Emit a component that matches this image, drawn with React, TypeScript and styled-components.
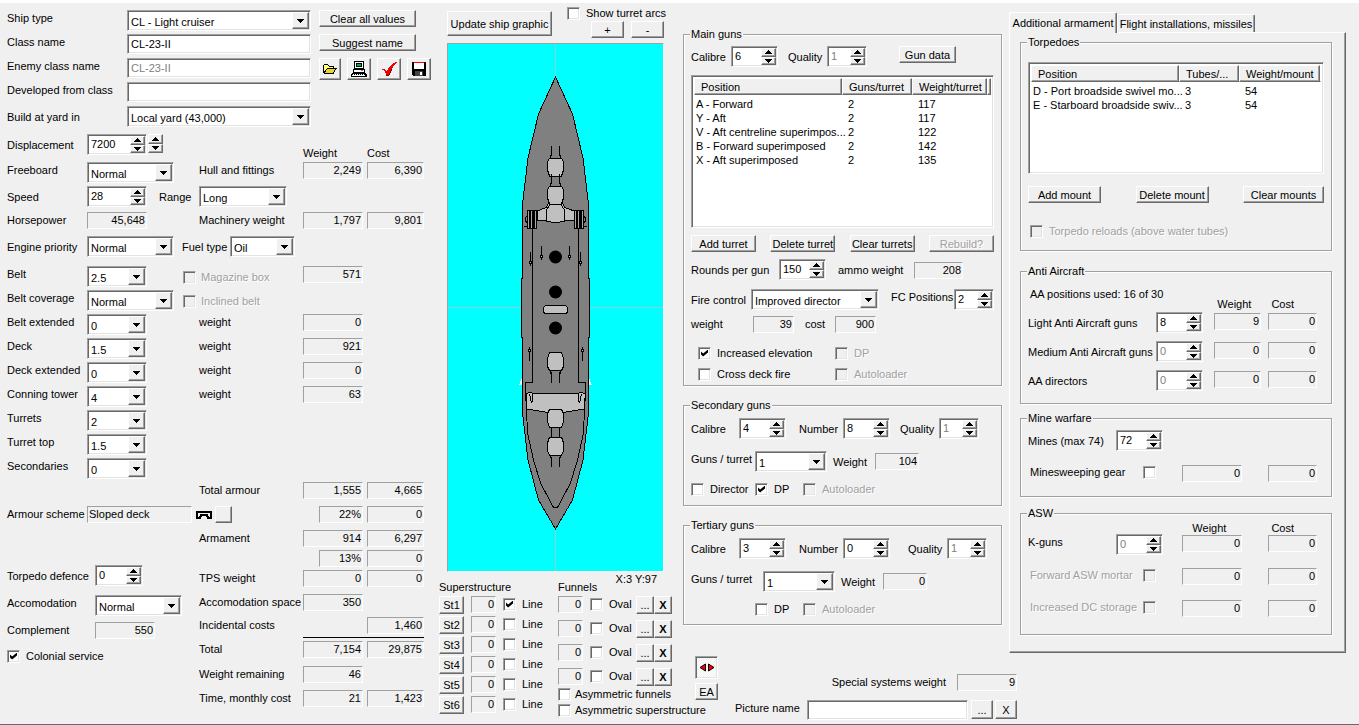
import React from "react";
import styled, { createGlobalStyle, css } from "styled-components";

const face = "#f0f0f0";
const shade = "#a0a0a0";
const dark = "#696969";
const soft = "#e3e3e3";

const GlobalStyle = createGlobalStyle`
  * { box-sizing: border-box; }
  body { margin: 0; background: ${face}; }
  body, button, input, select, output, legend, table {
    font-family: "Liberation Sans", Arial, sans-serif;
    font-size: 11px;
    line-height: 16px;
    color: #000;
  }
`;

const raised = css`
  background: ${face};
  border: 1px solid;
  border-color: #fff ${dark} ${dark} #fff;
  box-shadow: inset -1px -1px 0 ${shade};
`;

const sunken = css`
  background: #fff;
  border: 1px solid;
  border-color: ${shade} #fff #fff ${shade};
  box-shadow: inset 1px 1px 0 ${dark}, inset -1px -1px 0 ${soft};
`;

/* ---------- window layout ---------- */

const Page = styled.div`
  min-height: 100vh;
  display: flex;
  flex-direction: column;
  background: ${face};
  border-top: 3px solid #fff;
  white-space: nowrap;
`;
const Columns = styled.main`
  flex: 1;
  display: grid;
  grid-template-columns: minmax(432px, 439fr) minmax(232px, 244fr) minmax(650px, 676fr);
`;
const StatusEdge = styled.footer`
  height: 2px;
  background: #d8d8d8;
  border-top: 1px solid ${dark};
`;
const Column = styled.div`
  display: flex;
  flex-direction: column;
  min-width: 0;
`;
const Row = styled.div<{ $h?: number; $gap?: number; $mid?: boolean; $pad?: number; $top?: number }>`
  display: flex;
  flex: none;
  align-items: ${(p) => (p.$mid ? "center" : "flex-start")};
  height: ${(p) => (p.$h ? `${p.$h}px` : "auto")};
  gap: ${(p) => p.$gap ?? 0}px;
  padding-left: ${(p) => p.$pad ?? 0}px;
  margin-top: ${(p) => p.$top ?? 0}px;
`;
const Cell = styled.div<{ $w?: number; $gap?: number; $end?: boolean }>`
  display: flex;
  flex: ${(p) => (p.$w ? `0 0 ${p.$w}px` : "1 1 0")};
  min-width: 0;
  gap: ${(p) => p.$gap ?? 0}px;
  justify-content: ${(p) => (p.$end ? "flex-end" : "flex-start")};
`;

/* ---------- controls ---------- */

const Label = styled.label<{ $w?: number; $drop?: boolean }>`
  flex: none;
  width: ${(p) => (p.$w ? `${p.$w}px` : "auto")};
  padding-top: ${(p) => (p.$drop ? 3 : 0)}px;
`;
const Text = styled.span<{ $w?: number }>`
  flex: none;
  width: ${(p) => (p.$w ? `${p.$w}px` : "auto")};
`;
const ReadOut = styled.output<{ $w: number; $left?: boolean }>`
  flex: none;
  display: block;
  width: ${(p) => p.$w}px;
  height: 17px;
  padding: 0 1px;
  line-height: 15px;
  text-align: ${(p) => (p.$left ? "left" : "right")};
  border: 1px solid;
  border-color: ${shade} #fff #fff ${shade};
`;
const Button = styled.button<{ $w: number; $h?: number }>`
  ${raised}
  flex: none;
  display: flex;
  align-items: center;
  justify-content: center;
  width: ${(p) => p.$w}px;
  height: ${(p) => p.$h ?? 17}px;
  padding: 0;
  line-height: 14px;
  white-space: nowrap;
  &:disabled { color: ${shade}; text-shadow: 1px 1px 0 #fff; }
`;
const ToggleButton = styled(Button)`
  ${sunken}
  background: repeating-conic-gradient(#fff 0 25%, ${face} 0 50%) 0 0 / 2px 2px;
`;
const TextBox = styled.input`
  ${sunken}
  flex: 1 1 0;
  min-width: 0;
  height: 20px;
  padding: 0 3px;
  outline: none;
  &:disabled { color: #808080; }
`;

const SelectFrame = styled.div<{ $w?: number }>`
  ${sunken}
  position: relative;
  flex: ${(p) => (p.$w ? `0 0 ${p.$w}px` : "1 1 0")};
  min-width: 0;
  height: 21px;
`;
const NativeSelect = styled.select`
  appearance: none;
  display: block;
  width: 100%;
  height: 19px;
  padding: 2px 18px 0 3px;
  border: 0;
  background: transparent;
  outline: none;
`;
const DropArrow = styled.span`
  ${raised}
  position: absolute;
  top: 1px;
  right: 1px;
  width: 17px;
  height: 17px;
  display: flex;
  align-items: center;
  justify-content: center;
  pointer-events: none;
`;

const Triangle = ({ up }: { up?: boolean }) => (
  <svg width="7" height="4" viewBox="0 0 7 4" shapeRendering="crispEdges" aria-hidden="true">
    <path d={up ? "M3 0h1v1h1v1h1v1h1v1H0V3h1V2h1V1h1z" : "M0 0h7v1H6v1H5v1H4v1H3V3H2V2H1V1H0z"} />
  </svg>
);

function Select({ id, value, w }: { id: string; value: string; w?: number }) {
  return (
    <SelectFrame $w={w}>
      <NativeSelect id={id} defaultValue={value}>
        <option>{value}</option>
      </NativeSelect>
      <DropArrow><Triangle /></DropArrow>
    </SelectFrame>
  );
}

const SpinFrame = styled.div<{ $w: number }>`
  ${sunken}
  flex: none;
  display: flex;
  width: ${(p) => p.$w}px;
  height: 21px;
  padding: 1px;
`;
const SpinInput = styled.input`
  flex: 1;
  min-width: 0;
  width: 0;
  padding: 0 0 1px 2px;
  border: 0;
  outline: none;
  background: #fff;
  &:disabled { color: #808080; }
`;
const SpinPair = styled.div<{ $h: number }>`
  flex: none;
  display: grid;
  grid-template-rows: 1fr 1fr;
  width: 15px;
  height: ${(p) => p.$h}px;
`;
const SpinButton = styled.button`
  ${raised}
  min-height: 0;
  padding: 0;
  display: flex;
  align-items: center;
  justify-content: center;
`;

const Arrows = ({ name, h = 17 }: { name: string; h?: number }) => (
  <SpinPair $h={h}>
    <SpinButton type="button" aria-label={`Increase ${name}`}><Triangle up /></SpinButton>
    <SpinButton type="button" aria-label={`Decrease ${name}`}><Triangle /></SpinButton>
  </SpinPair>
);

function Spin({ id, value, w, off }: { id: string; value: string; w: number; off?: boolean }) {
  return (
    <SpinFrame $w={w}>
      <SpinInput id={id} defaultValue={value} disabled={off} />
      <Arrows name={id} />
    </SpinFrame>
  );
}

const CheckLabel = styled.label<{ $off?: boolean; $w?: number; $gap?: number; $reverse?: boolean; $drop?: boolean }>`
  flex: none;
  display: flex;
  align-items: center;
  flex-direction: ${(p) => (p.$reverse ? "row-reverse" : "row")};
  justify-content: ${(p) => (p.$reverse ? "space-between" : "flex-start")};
  gap: ${(p) => p.$gap ?? 6}px;
  width: ${(p) => (p.$w ? `${p.$w}px` : "auto")};
  padding-top: ${(p) => (p.$drop ? 3 : 0)}px;
  ${(p) => p.$off && css`color: ${shade}; text-shadow: 1px 1px 0 #fff;`}
`;
const CheckBox = styled.input`
  ${sunken}
  appearance: none;
  flex: none;
  width: 13px;
  height: 13px;
  margin: 0;
  display: grid;
  place-items: center;
  &:checked::after {
    content: "";
    width: 7px;
    height: 7px;
    background: #000;
    clip-path: polygon(0 28%, 30% 57%, 100% 0, 100% 42%, 30% 100%, 0 71%);
  }
  &:disabled { background: ${face}; }
`;

type CheckProps = { text: string; on?: boolean; off?: boolean; w?: number; gap?: number; reverse?: boolean; drop?: boolean };
const Check = ({ text, on, off, w, gap, reverse, drop }: CheckProps) => (
  <CheckLabel $off={off} $w={w} $gap={gap} $reverse={reverse} $drop={drop}>
    <CheckBox type="checkbox" defaultChecked={on} disabled={off} />
    {text}
  </CheckLabel>
);

const Group = styled.fieldset<{ $h: number; $top?: number }>`
  margin: ${(p) => p.$top ?? 0}px 0 0;
  padding: 0 7px;
  min-width: 0;
  height: ${(p) => p.$h}px;
  border: 1px solid ${shade};
  box-shadow: inset 1px 1px 0 #fff, 1px 1px 0 #fff;
`;
const Legend = styled.legend`
  padding: 0 1px;
  margin-left: -1px;
  line-height: 14px;
  background: ${face};
`;

/* ---------- lists ---------- */

const ListBox = styled.div<{ $h: number }>`
  ${sunken}
  height: ${(p) => p.$h}px;
  padding: 2px;
`;
const ListTable = styled.table`
  width: 100%;
  table-layout: fixed;
  border-collapse: separate;
  border-spacing: 0;
  th {
    ${raised}
    height: 17px;
    padding: 0 0 0 6px;
    font-weight: 400;
    line-height: 14px;
    text-align: left;
    overflow: hidden;
  }
  th:last-child, td:last-child { padding: 0; }
  td {
    height: 14px;
    padding: 0 0 0 6px;
    line-height: 14px;
  }
  td:first-child { padding-left: 2px; }
  tbody tr:first-child td { height: 16px; padding-top: 2px; }
`;

function List({ heads, widths, rows, h }: { heads: string[]; widths: number[]; rows: string[][]; h: number }) {
  return (
    <ListBox $h={h}>
      <ListTable>
        <colgroup>
          {widths.map((w, i) => <col key={i} width={w} />)}
          <col />
        </colgroup>
        <thead>
          <tr>{heads.map((t) => <th key={t}>{t}</th>)}<th aria-hidden="true" /></tr>
        </thead>
        <tbody>
          {rows.map((r) => (
            <tr key={r[0]}>{r.map((c, i) => <td key={i}>{c}</td>)}<td /></tr>
          ))}
        </tbody>
      </ListTable>
    </ListBox>
  );
}

/* ---------- icons ---------- */

const Icon = ({ children }: { children: React.ReactNode }) => (
  <svg width="16" height="16" viewBox="0 0 16 16" shapeRendering="crispEdges" aria-hidden="true">{children}</svg>
);
const OpenIcon = () => (
  <Icon>
    <path d="M1 12V4h1V3h4v1h1v1h5v2h3v1h-1v1h-1v2h-1v2H2v-1z" fill="#000" />
    <path d="M2 4h4v1h1v1h4v1H5v1H4v1H3v1H2z" fill="#ffff80" />
    <path d="M5 8h8v1h-1v2h-1v1H3v-1h1V9h1z" fill="#e8d820" />
  </Icon>
);
const PcIcon = () => (
  <Icon>
    <path d="M3 0h10v8H3zM2 8h12v4H2zM1 12h14v1h1v3H0v-3h1z" />
    <path d="M4 1h8v6H4zM3 9h10v2H3zM2 13h1v1h1v-1h1v1h1v-1h1v1h1v-1h1v1h1v-1h1v1h1v-1h1v1h1v1H1v-1h1z" fill="#fff" />
    <path d="M5 2h6v4H5z" />
    <path d="M6 3h4v2H6z" fill="#00b050" />
    <path d="M10 9h2v1h-2z" fill="#808080" />
  </Icon>
);
const TickIcon = () => (
  <Icon>
    <path d="M1 8h3v1h1v1h1V9h1V7h1V6h1V5h1V4h1V3h1V2h2V1h2v1h-1v1h-1v1h-1v1h-1v2h-1v1h-1v2H9v2H8v2H5v-2H4v-2H3v-1H2V9H1z" fill="#f00000" />
    <path d="M5 14h3v1H5zM8 12h1v2H8zM9 10h1v2H9zM10 8h1v2h-1z" fill="#700" />
  </Icon>
);
const DiskIcon = () => (
  <Icon>
    <path d="M1 1h14v14H2v-1H1z" />
    <path d="M3 2h10v6H3z" fill="#fff" />
    <path d="M3 1h10v1H3z" fill="#f00" />
    <path d="M4 10h8v5H4z" fill="#444" />
    <path d="M9 11h2v3H9z" fill="#fff" />
  </Icon>
);
const SlopedDeckIcon = () => (
  <svg width="16" height="8" viewBox="0 0 16 8" shapeRendering="crispEdges" aria-hidden="true">
    <path d="M0 0h16v8h-5V6h-1V5H6v1H5v2H0zM2 2v4h1V5h1V3h8v2h1v1h1V2z" fillRule="evenodd" />
  </svg>
);
const MirrorIcon = () => (
  <svg width="16" height="9" viewBox="0 0 16 9" aria-hidden="true">
    <path d="M6.5 1v7L1 4.500zM9.500 1v7L15 4.500z" fill="#f00" stroke="#000" />
  </svg>
);

/* ---------- ship plan ---------- */

const Sea = styled.div`
  width: 217px;
  height: 529px;
  border: 1px solid;
  border-color: ${shade} #fff #fff ${shade};
  background: #0ff;
  svg { display: block; }
`;

const Turret = ({ y, aft }: { y: number; aft?: boolean }) => (
  <g transform={`translate(555.5 ${y})${aft ? " scale(1 -1)" : ""}`} stroke="#000">
    <path d="M-4-21V-14L-5-9M4-21V-14L5-9" fill="none" strokeWidth="1.300" />
    <path d="M-6-9H6L8-5V3L6 9H-6L-8 3V-5z" fill="#c0c0c0" />
  </g>
);
const Barbette = ({ x }: { x: number }) => (
  <g>
    <path d={`M${x} 210h10v19h-10z`} fill="#000" />
    <path d={`M${x + 1.5} 211v17M${x + 4.5} 211v17M${x + 8.5} 211v17`} stroke="#a8a8a8" />
  </g>
);
const LightGun = ({ x, y, up }: { x: number; y: number; up?: boolean }) => (
  <g transform={`translate(${x} ${y})${up ? " scale(1 -1)" : ""}`}>
    <path d="M.5-10V4M-.5-1V2M1.500-1V2" stroke="#000" />
    <path d="M0 0h1v1H0z" fill="#c0c0c0" />
  </g>
);

const ShipPlan = () => (
  <svg width="215" height="527" viewBox="448 44 215 527" role="img" aria-label="Ship plan" shapeRendering="crispEdges">
    <path d="M555.5 44V571M448 307.500H663" stroke="#c0c0c0" strokeOpacity=".7" />
    <path d="M519 385l3-7v7zM592 385l-3-7v7z" fill="#fff" />
    <path
      d="M555.5 77L538.500 114L528 158L522.500 204V278H521.500V337H522.500V413L528 460L538.500 500L555.500 529L572.500 500L583 460L588.500 413V337H589.500V278H588.500V204L583 158L572.500 114z"
      fill="#808080" stroke="#000"
    />
    <path
      d="M532.500 228V382.500H525.500V393L526.500 409L527.500 433L533.500 460L540.500 483L553.500 507.500H557.500L570.500 483L577.500 460L583.500 433L584.500 409L585.500 393V382.500H578.500V228"
      fill="none" stroke="#000"
    />
    <Turret y={167} />
    <path d="M549.500 201.500L546 207.500L537.500 211V220.500H574V211L565 207.500L561.500 201.500z" fill="#c0c0c0" stroke="#000" />
    <Turret y={195} />
    <path d="M550 204.500H561L564.500 210V221.500L555.500 222.500L546.500 221.500V210z" fill="#c0c0c0" stroke="#000" />
    <path d="M524 226.500h4M583 226.500h4M527 216l-1.500 2v3l1.500 2M584 216l1.500 2v3l-1.500 2" fill="none" stroke="#000" />
    <Barbette x={527} />
    <Barbette x={574} />
    <LightGun x={541} y={256} />
    <LightGun x={530} y={262} />
    <LightGun x={569} y={256} />
    <LightGun x={580} y={262} />
    <g shapeRendering="auto">
      <circle cx="555.500" cy="257" r="6.500" />
      <circle cx="555.500" cy="292" r="6.500" />
      <circle cx="555.500" cy="328" r="6.500" />
    </g>
    <rect x="543.500" y="305.500" width="24" height="8" rx="3" fill="#c0c0c0" stroke="#000" />
    <LightGun x={529} y={351} up />
    <LightGun x={582} y={351} up />
    <Turret y={361.5} aft />
    <path d="M526 397V394L530 392L533 393.500H578L581 392L585 394V398L584 409L563 412.500H548L527 409z" fill="#c0c0c0" stroke="#000" />
    <path d="M529.500 394l2 9M532.500 393v9M581.500 394l-2 9M578.500 393v9" stroke="#000" />
    <Turret y={446} aft />
    <path d="M551.500 427V438M559.500 427V438" stroke="#000" />
    <path d="M549.500 409.500H561.500L563.500 413.500V421.500L561.500 427.500H549.500L547.500 421.500V413.500z" fill="#c0c0c0" stroke="#000" />
  </svg>
);

/* ---------- left column: general data ---------- */

const LeftColumn = styled(Column)`
  padding: 7px 15px 0 7px;
`;
const HeadForm = styled.div`
  display: grid;
  grid-template-columns: minmax(0, 304px) 112px;
  column-gap: 8px;
  margin-right: -7px;
`;
const ToolRow = styled.div`
  display: flex;
  justify-content: space-between;
`;
const TotalRule = styled.hr`
  flex: none;
  width: 121px;
  margin: 2px 0 3px auto;
  border: 0;
  border-top: 1px solid #000;
  height: 0;
`;
const Split = styled.div`
  display: flex;
  padding-bottom: 13px;
`;
const WeightCost = styled.div`
  display: flex;
  align-self: flex-end;
  width: 121px;
  padding-bottom: 1px;
`;
const SummaryColumn = styled(Column)`
  flex: 1;
`;

const General = () => (
  <HeadForm>
    <Column>
      <Row $h={24}><Label htmlFor="ship-type" $w={120}>Ship type</Label><Select id="ship-type" value="CL - Light cruiser" /></Row>
      <Row $h={24}><Label htmlFor="class-name" $w={120}>Class name</Label><TextBox id="class-name" defaultValue="CL-23-II" /></Row>
      <Row $h={24}><Label htmlFor="enemy-class" $w={120}>Enemy class name</Label><TextBox id="enemy-class" defaultValue="CL-23-II" disabled /></Row>
      <Row $h={24}><Label htmlFor="developed-from" $w={120}>Developed from class</Label><TextBox id="developed-from" /></Row>
      <Row $h={28}><Label htmlFor="yard" $w={120} $drop>Build at yard in</Label><Select id="yard" value="Local yard (43,000)" /></Row>
    </Column>
    <Column>
      <Row $h={24}><Button type="button" $w={97}>Clear all values</Button></Row>
      <Row $h={24}><Button type="button" $w={97}>Suggest name</Button></Row>
      <ToolRow>
        <Button type="button" $w={22} $h={22} aria-label="Open"><OpenIcon /></Button>
        <Button type="button" $w={24} $h={22} aria-label="Computer"><PcIcon /></Button>
        <Button type="button" $w={24} $h={22} aria-label="Check design"><TickIcon /></Button>
        <Button type="button" $w={24} $h={22} aria-label="Save"><DiskIcon /></Button>
      </ToolRow>
    </Column>
  </HeadForm>
);

const Totals = ({ name, weight, cost, narrow }: { name: string; weight?: string; cost?: string; narrow?: boolean }) => (
  <Cell $w={121} $gap={4} $end>
    {weight !== undefined && <ReadOut $w={narrow ? 44 : 60} aria-label={`${name} weight`}>{weight}</ReadOut>}
    {cost !== undefined ? <ReadOut $w={57} aria-label={`${name} cost`}>{cost}</ReadOut> : <Text $w={57} />}
  </Cell>
);

const armour = [
  { id: "belt-extended", name: "Belt extended", value: "0", weight: "0" },
  { id: "deck", name: "Deck", value: "1.5", weight: "921" },
  { id: "deck-extended", name: "Deck extended", value: "0", weight: "0" },
  { id: "conning-tower", name: "Conning tower", value: "4", weight: "63" },
  { id: "turrets", name: "Turrets", value: "2" },
  { id: "turret-top", name: "Turret top", value: "1.5" },
  { id: "secondaries", name: "Secondaries", value: "0" },
];

const Hull = () => (
  <LeftColumn>
    <General />
    <Row $h={28}>
      <Label htmlFor="displacement" $w={80} $drop>Displacement</Label>
      <Cell $gap={1}><Spin id="displacement" value="7200" w={60} /><Arrows name="displacement step" h={19} /></Cell>
      <WeightCost><Text $w={64}>Weight</Text><Text>Cost</Text></WeightCost>
    </Row>
    <Row $h={24}>
      <Label htmlFor="freeboard" $w={80}>Freeboard</Label>
      <Cell $w={112}><Select id="freeboard" value="Normal" w={87} /></Cell>
      <Cell>Hull and fittings</Cell>
      <Totals name="Hull" weight="2,249" cost="6,390" />
    </Row>
    <Row $h={26}>
      <Label htmlFor="speed" $w={80} $drop>Speed</Label>
      <Cell $w={72}><Spin id="speed" value="28" w={60} /></Cell>
      <Label htmlFor="range" $w={40} $drop>Range</Label>
      <Select id="range" value="Long" w={88} />
    </Row>
    <Row $h={24}>
      <Label htmlFor="horsepower" $w={80}>Horsepower</Label>
      <Cell $w={112}><ReadOut id="horsepower" $w={60}>45,648</ReadOut></Cell>
      <Cell>Machinery weight</Cell>
      <Totals name="Machinery" weight="1,797" cost="9,801" />
    </Row>
    <Row $h={30}>
      <Label htmlFor="engine-priority" $w={80} $drop>Engine priority</Label>
      <Cell $w={95}><Select id="engine-priority" value="Normal" w={87} /></Cell>
      <Label htmlFor="fuel" $w={48} $drop>Fuel type</Label>
      <Select id="fuel" value="Oil" w={65} />
    </Row>
    <Row $h={24}>
      <Label htmlFor="belt" $w={80}>Belt</Label>
      <Cell $w={96}><Select id="belt" value="2.5" w={60} /></Cell>
      <Cell><Check text="Magazine box" off gap={5} drop /></Cell>
      <Totals name="Belt" weight="571" />
    </Row>
    <Row $h={24}>
      <Label htmlFor="belt-coverage" $w={80}>Belt coverage</Label>
      <Cell $w={96}><Select id="belt-coverage" value="Normal" w={87} /></Cell>
      <Cell><Check text="Inclined belt" off gap={5} drop /></Cell>
    </Row>
    {armour.map((a) => (
      <Row $h={24} key={a.id}>
        <Label htmlFor={a.id} $w={80}>{a.name}</Label>
        <Cell $w={112}><Select id={a.id} value={a.value} w={60} /></Cell>
        <Cell>{a.weight && "weight"}</Cell>
        <Totals name={a.name} weight={a.weight} />
      </Row>
    ))}
    <Row $h={24} $pad={192}>
      <Cell>Total armour</Cell>
      <Totals name="Total armour" weight="1,555" cost="4,665" />
    </Row>
    <Row $h={24}>
      <Label htmlFor="armour-scheme" $w={80}>Armour scheme</Label>
      <Cell $gap={4}>
        <ReadOut id="armour-scheme" $w={105} $left>Sloped deck</ReadOut>
        <Row $gap={3} $mid><SlopedDeckIcon /><Button type="button" $w={17} aria-label="Change armour scheme" /></Row>
      </Cell>
      <Totals name="Armour share" weight="22%" cost="0" narrow />
    </Row>
    <Split>
      <Cell $w={192}>
        <Column>
          <Row $h={30} $top={35}>
            <Label htmlFor="torpedo-defence" $w={88} $drop>Torpedo defence</Label>
            <Spin id="torpedo-defence" value="0" w={48} />
          </Row>
          <Row $h={27}>
            <Label htmlFor="accomodation" $w={88}>Accomodation</Label>
            <Select id="accomodation" value="Normal" w={87} />
          </Row>
          <Row $h={26}>
            <Label htmlFor="complement" $w={88}>Complement</Label>
            <ReadOut id="complement" $w={60}>550</ReadOut>
          </Row>
          <Row $h={16}><Check text="Colonial service" on /></Row>
        </Column>
      </Cell>
      <SummaryColumn>
        <Row $h={20}><Cell>Armament</Cell><Totals name="Armament" weight="914" cost="6,297" /></Row>
        <Row $h={20}><Cell /><Totals name="Armament share" weight="13%" cost="0" narrow /></Row>
        <Row $h={24}><Cell>TPS weight</Cell><Totals name="TPS" weight="0" cost="0" /></Row>
        <Row $h={23}><Cell>Accomodation space</Cell><Totals name="Accomodation" weight="350" /></Row>
        <Row $h={18}><Cell>Incidental costs</Cell><Totals name="Incidental" cost="1,460" /></Row>
        <TotalRule />
        <Row $h={25}><Cell>Total</Cell><Totals name="Total" weight="7,154" cost="29,875" /></Row>
        <Row $h={24}><Cell>Weight remaining</Cell><Totals name="Remaining" weight="46" /></Row>
        <Row $h={17}><Cell>Time, monthly cost</Cell><Totals name="Monthly" weight="21" cost="1,423" /></Row>
      </SummaryColumn>
    </Split>
  </LeftColumn>
);

/* ---------- centre column: ship graphic ---------- */

const CentreColumn = styled(Column)`
  padding-top: 2px;
`;
const GraphicHead = styled.div`
  display: flex;
  gap: 15px;
  height: 38px;
  padding-left: 8px;
`;
const GraphicPanel = styled.div`
  padding-left: 8px;
`;
const UpdateWrap = styled.div`
  padding-top: 6px;
`;
const Coordinates = styled.div`
  width: 218px;
  height: 7px;
  line-height: 14px;
  text-align: right;
`;

const Centre = () => (
  <CentreColumn>
    <GraphicHead>
      <UpdateWrap><Button type="button" $w={105} $h={25}>Update ship graphic</Button></UpdateWrap>
      <Column>
        <Row $h={16} $mid><Check text="Show turret arcs" /></Row>
        <Row $gap={7} $pad={24}>
          <Button type="button" $w={33} aria-label="Zoom in">+</Button>
          <Button type="button" $w={33} aria-label="Zoom out">-</Button>
        </Row>
      </Column>
    </GraphicHead>
    <GraphicPanel><Sea><ShipPlan /></Sea></GraphicPanel>
    <Coordinates>X:3 Y:97</Coordinates>
    <Row>
      <Cell $w={119}>
        <Column>
          <Row $h={17}>Superstructure</Row>
          {["St1", "St2", "St3", "St4", "St5", "St6"].map((s, i) => (
            <Row key={s} $h={20}>
              <Cell $w={32}><Button type="button" $w={25} $h={18}>{s}</Button></Cell>
              <Cell $w={32}><ReadOut $w={25} aria-label={`${s} value`}>0</ReadOut></Cell>
              <Check text="Line" on={i === 0} />
            </Row>
          ))}
        </Column>
      </Cell>
      <Column>
        <Row $h={17}>Funnels</Row>
        {[1, 2, 3, 4].map((n) => (
          <Row key={n} $h={n === 4 ? 18 : 24}>
            <Cell $w={32}><ReadOut $w={25} aria-label={`Funnel ${n}`}>0</ReadOut></Cell>
            <Cell $w={46}><Check text="Oval" /></Cell>
            <Button type="button" $w={18} $h={18} aria-label={`Move funnel ${n}`}>...</Button>
            <Button type="button" $w={18} $h={18} aria-label={`Remove funnel ${n}`}><b>X</b></Button>
          </Row>
        ))}
        <Check text="Asymmetric funnels" gap={4} />
        <Check text="Asymmetric superstructure" gap={4} />
      </Column>
    </Row>
  </CentreColumn>
);

/* ---------- guns ---------- */

const RightTop = styled.div`
  display: grid;
  grid-template-columns: minmax(0, 319fr) minmax(0, 337fr);
  column-gap: 7px;
  padding-right: 13px;
`;
const GunsColumn = styled(Column)`
  padding-top: 24px;
`;
const ButtonRow = styled.div`
  display: flex;
  justify-content: space-between;
  padding-top: 7px;
`;

const gunRows = [
  ["A - Forward", "2", "117"],
  ["Y - Aft", "2", "117"],
  ["V - Aft centreline superimpos...", "2", "122"],
  ["B - Forward superimposed", "2", "142"],
  ["X - Aft superimposed", "2", "135"],
];

const MainGuns = () => (
  <Group $h={359}>
    <Legend>Main guns</Legend>
    <Row $h={29} $top={5}>
      <Label htmlFor="main-calibre" $w={40} $drop>Calibre</Label>
      <Cell $w={57}><Spin id="main-calibre" value="6" w={47} /></Cell>
      <Label htmlFor="main-quality" $w={39} $drop>Quality</Label>
      <Cell $w={72}><Spin id="main-quality" value="1" w={40} off /></Cell>
      <Button type="button" $w={57}>Gun data</Button>
    </Row>
    <List h={153} heads={["Position", "Guns/turret", "Weight/turret"]} widths={[148, 70, 75]} rows={gunRows} />
    <ButtonRow>
      <Button type="button" $w={65}>Add turret</Button>
      <Button type="button" $w={65}>Delete turret</Button>
      <Button type="button" $w={65}>Clear turrets</Button>
      <Button type="button" $w={65} disabled>Rebuild?</Button>
    </ButtonRow>
    <Row $h={30} $top={7}>
      <Label htmlFor="rounds" $w={88} $drop>Rounds per gun</Label>
      <Cell $w={59}><Spin id="rounds" value="150" w={47} /></Cell>
      <Label htmlFor="ammo" $w={76} $drop>ammo weight</Label>
      <Row $top={3}><ReadOut id="ammo" $w={49}>208</ReadOut></Row>
    </Row>
    <Row $h={27}>
      <Label htmlFor="fire-control" $w={60} $drop>Fire control</Label>
      <Cell $w={140}><Select id="fire-control" value="Improved director" w={128} /></Cell>
      <Label htmlFor="fc-positions" $w={63}>FC Positions</Label>
      <Spin id="fc-positions" value="2" w={40} />
    </Row>
    <Row $h={29}>
      <Label htmlFor="fc-weight" $w={62}>weight</Label>
      <Cell $w={52}><ReadOut id="fc-weight" $w={41}>39</ReadOut></Cell>
      <Label htmlFor="fc-cost" $w={30}>cost</Label>
      <ReadOut id="fc-cost" $w={41}>900</ReadOut>
    </Row>
    <Row $h={21} $pad={7}><Check text="Increased elevation" on w={137} /><Check text="DP" off /></Row>
    <Row $h={16} $pad={7}><Check text="Cross deck fire" w={137} /><Check text="Autoloader" off /></Row>
  </Group>
);

type BatteryProps = {
  id: string; name: string; calibre: string; number: string; weight: string;
  h: number; indent: number; director?: boolean; dp?: boolean;
};
const Battery = ({ id, name, calibre, number, weight, h, indent, director, dp }: BatteryProps) => (
  <Group $h={h} $top={12}>
    <Legend>{name}</Legend>
    <Row $h={33} $top={6}>
      <Label htmlFor={`${id}-calibre`} $w={48} $drop>Calibre</Label>
      <Cell $w={60}><Spin id={`${id}-calibre`} value={calibre} w={47} /></Cell>
      <Label htmlFor={`${id}-number`} $w={44} $drop>Number</Label>
      <Cell $w={57 + indent}><Spin id={`${id}-number`} value={number} w={47} /></Cell>
      <Label htmlFor={`${id}-quality`} $w={39} $drop>Quality</Label>
      <Spin id={`${id}-quality`} value="1" w={40} off />
    </Row>
    <Row $h={30}>
      <Label htmlFor={`${id}-turret`} $w={64 + indent}>Guns / turret</Label>
      <Cell $w={78}><Select id={`${id}-turret`} value="1" w={72} /></Cell>
      <Label htmlFor={`${id}-weight`} $w={42} $drop>Weight</Label>
      <Row $top={2}><ReadOut id={`${id}-weight`} $w={44}>{weight}</ReadOut></Row>
    </Row>
    <Row>
      <Cell $w={64}>{director && <Check text="Director" />}</Cell>
      <Cell $w={48}><Check text="DP" on={dp} /></Cell>
      <Check text="Autoloader" off />
    </Row>
  </Group>
);

/* ---------- tabs ---------- */

const TabsColumn = styled(Column)`
  padding-top: 9px;
`;
const TabStrip = styled.div`
  display: flex;
  align-items: flex-end;
  height: 20px;
`;
const Tab = styled.button<{ $on?: boolean; $w: number }>`
  flex: none;
  width: ${(p) => p.$w}px;
  height: ${(p) => (p.$on ? 21 : 18)}px;
  margin-bottom: ${(p) => (p.$on ? -1 : 0)}px;
  padding: 0;
  border: 1px solid;
  border-color: #fff ${dark} transparent #fff;
  border-bottom: 0;
  border-radius: 2px 2px 0 0;
  box-shadow: inset -1px 0 0 ${shade};
  background: ${face};
  z-index: ${(p) => (p.$on ? 1 : 0)};
`;
const TabPanel = styled.section`
  height: 621px;
  padding: 2px 13px 0 10px;
  border: 1px solid;
  border-color: #fff ${dark} ${dark} #fff;
  box-shadow: inset -1px -1px 0 ${shade};
`;
const PairBox = styled.div<{ $gap: number }>`
  flex: 1;
  display: flex;
  justify-content: flex-end;
  gap: ${(p) => p.$gap}px;
  padding: 1px 7px 0 0;
`;
const PairHead = styled.div<{ $gap: number }>`
  flex: 1;
  display: flex;
  justify-content: flex-end;
  gap: ${(p) => p.$gap}px;
  padding-right: 30px;
`;
const Pair = ({ id, first = 47, weight, gap }: { id: string; first?: number; weight: string; gap?: boolean }) => (
  <PairBox $gap={gap ? 26 : 7}>
    <ReadOut $w={first} aria-label={`${id} weight`}>{weight}</ReadOut>
    <ReadOut $w={49} aria-label={`${id} cost`}>0</ReadOut>
  </PairBox>
);

const mountRows = [
  ["D - Port broadside swivel mo...", "3", "54"],
  ["E - Starboard broadside swiv...", "3", "54"],
];
const aaRows = [
  { id: "light-aa", name: "Light Anti Aircraft guns", value: "8", weight: "9" },
  { id: "medium-aa", name: "Medium Anti Aircraft guns", value: "0", weight: "0", off: true },
  { id: "aa-directors", name: "AA directors", value: "0", weight: "0", off: true },
];

const Tabs = () => (
  <TabsColumn>
    <TabStrip role="tablist">
      <Tab type="button" role="tab" aria-selected $on $w={108}>Additional armament</Tab>
      <Tab type="button" role="tab" $w={138}>Flight installations, missiles</Tab>
    </TabStrip>
    <TabPanel>
      <Group $h={216}>
        <Legend>Torpedoes</Legend>
        <Row $h={13} />
        <List h={112} heads={["Position", "Tubes/...", "Weight/mount"]} widths={[148, 60, 81]} rows={mountRows} />
        <Row $h={5} />
        <ButtonRow>
          <Button type="button" $w={73}>Add mount</Button>
          <Button type="button" $w={73}>Delete mount</Button>
          <Button type="button" $w={81}>Clear mounts</Button>
        </ButtonRow>
        <Row $top={20} $pad={2}><Check text="Torpedo reloads (above water tubes)" off /></Row>
      </Group>
      <Group $h={140} $top={13}>
        <Legend>Anti Aircraft</Legend>
        <Row $h={10} $top={8} $pad={2}>AA positions used: 16 of 30</Row>
        <Row $h={16}><PairHead $gap={20}><Text>Weight</Text><Text>Cost</Text></PairHead></Row>
        {aaRows.map((r) => (
          <Row key={r.id} $h={29}>
            <Label htmlFor={r.id} $w={128} $drop>{r.name}</Label>
            <Spin id={r.id} value={r.value} w={47} off={r.off} />
            <Pair id={r.name} weight={r.weight} />
          </Row>
        ))}
      </Group>
      <Group $h={86} $top={7}>
        <Legend>Mine warfare</Legend>
        <Row $h={34} $top={5}>
          <Label htmlFor="mines" $w={88} $drop>Mines (max 74)</Label>
          <Spin id="mines" value="72" w={47} />
        </Row>
        <Row $pad={2}>
          <Check text="Minesweeping gear" reverse w={126} />
          <Pair id="Minesweeping" first={60} weight="0" gap />
        </Row>
      </Group>
      <Group $h={129} $top={9}>
        <Legend>ASW</Legend>
        <Row $h={14}><PairHead $gap={45}><Text>Weight</Text><Text>Cost</Text></PairHead></Row>
        <Row $h={33}>
          <Label htmlFor="k-guns" $w={88}>K-guns</Label>
          <Spin id="k-guns" value="0" w={47} off />
          <Pair id="K-guns" first={60} weight="0" gap />
        </Row>
        <Row $h={32} $pad={2}>
          <Check text="Forward ASW mortar" reverse off w={126} />
          <Pair id="Forward mortar" first={60} weight="0" gap />
        </Row>
        <Row $h={32} $pad={2}>
          <Check text="Increased DC storage" reverse off w={126} />
          <Pair id="DC storage" first={60} weight="0" gap />
        </Row>
      </Group>
    </TabPanel>
  </TabsColumn>
);

const BottomBar = styled.div`
  display: flex;
  gap: 17px;
  padding: 3px 0 4px 12px;
`;
const SystemsRow = styled.div`
  display: flex;
  justify-content: flex-end;
  gap: 11px;
  height: 26px;
`;
const PictureBox = styled(TextBox)`
  flex: 0 0 161px;
`;

const Bottom = () => (
  <BottomBar>
    <Column>
      <Row $h={27}><ToggleButton type="button" $w={23} $h={23} aria-label="Mirror"><MirrorIcon /></ToggleButton></Row>
      <Button type="button" $w={23}>EA</Button>
    </Column>
    <Column>
      <Row $h={18} />
      <SystemsRow>
        <Label htmlFor="special-systems">Special systems weight</Label>
        <ReadOut id="special-systems" $w={60}>9</ReadOut>
      </SystemsRow>
      <Row>
        <Label htmlFor="picture-name" $w={72}>Picture name</Label>
        <PictureBox id="picture-name" />
        <Row $gap={2} $pad={3}>
          <Button type="button" $w={22} $h={19} aria-label="Browse">...</Button>
          <Button type="button" $w={22} $h={19} aria-label="Clear picture">X</Button>
        </Row>
      </Row>
    </Column>
  </BottomBar>
);

export default function App() {
  return (
    <Page>
      <GlobalStyle />
      <Columns>
        <Hull />
        <Centre />
        <Column>
          <RightTop>
            <GunsColumn>
              <MainGuns />
              <Battery id="secondary" name="Secondary guns" calibre="4" number="8" weight="104" h={108} indent={0} director dp />
              <Battery id="tertiary" name="Tertiary guns" calibre="3" number="0" weight="0" h={107} indent={8} />
            </GunsColumn>
            <Tabs />
          </RightTop>
          <Bottom />
        </Column>
      </Columns>
      <StatusEdge />
    </Page>
  );
}
